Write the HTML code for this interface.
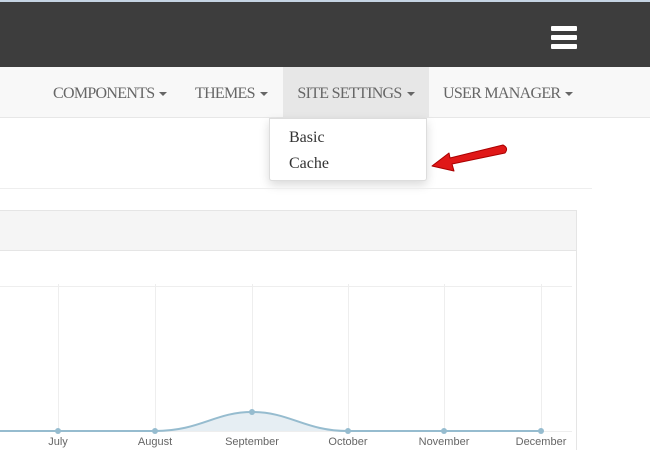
<!DOCTYPE html>
<html style="width:650px;height:450px;overflow:hidden"><head><style>
body{margin:0;width:650px;height:450px;overflow:hidden;background:#fff;font-family:"Liberation Sans",sans-serif;position:relative}
.top{position:absolute;left:0;top:0;width:650px;height:67px;background:#3d3d3d;border-top:2px solid #c5d4e3;box-sizing:border-box}
.hb{position:absolute;left:551px;width:26px;height:5px;background:#fff;border-radius:1px}
.nav{position:absolute;top:67px;left:0;width:650px;height:51px;background:#f8f8f8;border-bottom:1px solid #e7e7e7;box-sizing:border-box}
.it{position:absolute;top:0;height:51px;line-height:54px;font-family:"Liberation Serif",serif;font-size:16px;color:#666;letter-spacing:-0.7px}
.c{display:inline-block;width:0;height:0;border-left:4px solid transparent;border-right:4px solid transparent;border-top:4px solid #666;vertical-align:middle;margin-left:5px}
.dd{position:absolute;left:269px;top:118px;width:158px;height:63px;background:#fff;border:1px solid #ddd;border-radius:0 0 3px 3px;box-shadow:0 4px 10px rgba(0,0,0,.15);box-sizing:border-box}
.dd div{position:absolute;left:19px;font-size:16px;color:#333;font-family:"Liberation Serif",serif}
.lab{position:absolute;top:436px;font-size:11px;color:#666;transform:translateX(-50%)}
</style></head><body>
<div class="top"><div class="hb" style="top:24px"></div><div class="hb" style="top:33px"></div><div class="hb" style="top:42px"></div></div>
<div class="nav">
<div class="it" style="left:53px">COMPONENTS<span class="c"></span></div>
<div class="it" style="left:195px">THEMES<span class="c"></span></div>
<div class="it" style="left:283px;width:146px;background:#e7e7e7;text-align:center">SITE SETTINGS<span class="c"></span></div>
<div class="it" style="left:443px">USER MANAGER<span class="c"></span></div>
</div>
<div class="dd"><div style="top:10px">Basic</div><div style="top:36px">Cache</div></div>
<div style="position:absolute;left:0;top:188px;width:592px;height:1px;background:#eee"></div>
<div style="position:absolute;left:-1px;top:210px;width:578px;height:240px;border:1px solid #e5e5e5;border-bottom:none;box-sizing:border-box"></div>
<div style="position:absolute;left:0;top:211px;width:576px;height:39px;background:#f5f5f5;border-bottom:1px solid #e5e5e5"></div>
<svg style="position:absolute;left:0;top:0" width="650" height="450">
<g stroke="#eee" stroke-width="1">
<line x1="0" y1="286.5" x2="572" y2="286.5"/>
<line x1="58.5" y1="284" x2="58.5" y2="432"/><line x1="155.5" y1="284" x2="155.5" y2="432"/><line x1="252.5" y1="284" x2="252.5" y2="432"/><line x1="348.5" y1="284" x2="348.5" y2="432"/><line x1="444.5" y1="284" x2="444.5" y2="432"/><line x1="541.5" y1="284" x2="541.5" y2="432"/>
<line x1="0" y1="431.5" x2="572" y2="431.5"/>
</g>
<path d="M155 431 C200 431 215 412 252 412 C290 412 305 431 348 431 Z" fill="#e6eef3"/>
<path d="M0 431 L155 431 C200 431 215 412 252 412 C290 412 305 431 348 431 L541 431" fill="none" stroke="#96bccf" stroke-width="2"/>
<g fill="#96bccf"><circle cx="58" cy="431" r="3"/><circle cx="155" cy="431" r="3"/><circle cx="252" cy="412" r="3"/><circle cx="348" cy="431" r="3"/><circle cx="444" cy="431" r="3"/><circle cx="541" cy="431" r="3"/></g>
<path d="M503 145 Q509 148 505 153 L452 164 L454 171 L432 166 L449 153 L450 158 Z" fill="#e01818" stroke="#a00" stroke-width="1" stroke-linejoin="round"/>
</svg>
<div class="lab" style="left:58px">July</div><div class="lab" style="left:155px">August</div><div class="lab" style="left:252px">September</div><div class="lab" style="left:348px">October</div><div class="lab" style="left:444px">November</div><div class="lab" style="left:541px">December</div>
</body></html>
